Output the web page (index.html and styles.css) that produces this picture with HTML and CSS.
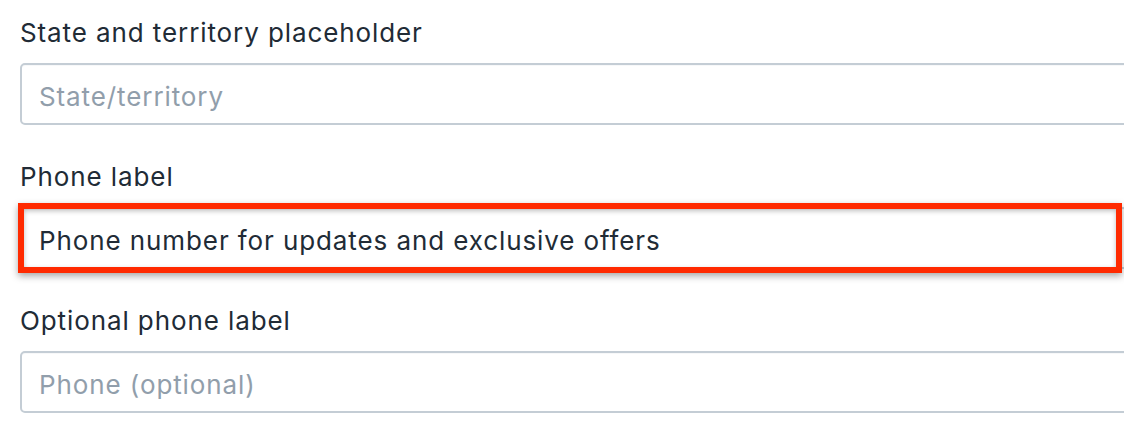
FILE: index.html
```html
<!DOCTYPE html>
<html lang="en">
<head>
<meta charset="utf-8">
<title>Form fields</title>
<link rel="stylesheet" href="styles.css">
</head>
<body>
<div class="page">
  <div class="field">
    <label class="label" for="state">State and territory placeholder</label>
    <div class="input-wrap">
      <input class="input" id="state" type="text" placeholder="State/territory">
    </div>
  </div>
  <div class="field">
    <label class="label" for="phone">Phone label</label>
    <div class="input-wrap">
      <input class="input" id="phone" type="text" value="Phone number for updates and exclusive offers">
      <div class="highlight"></div>
    </div>
  </div>
  <div class="field">
    <label class="label" for="phone2">Optional phone label</label>
    <div class="input-wrap">
      <input class="input" id="phone2" type="text" placeholder="Phone (optional)">
    </div>
  </div>
</div>
</body>
</html>
```
FILE: styles.css
```css
html, body {
  margin: 0;
  padding: 0;
  background: #ffffff;
  overflow: hidden;
}
body {
  width: 1124px;
  height: 440px;
  font-family: Inter, "Noto Sans", sans-serif;
  color: #212b36;
}
.page {
  padding: 17px 0 0 20px;
  display: flex;
  flex-direction: column;
}
.field {
  display: flex;
  flex-direction: column;
  margin-bottom: 36px;
}
.label {
  display: block;
  font-size: 26px;
  line-height: 32px;
  letter-spacing: 0.9px;
  color: #212b36;
  margin-bottom: 14px;
}
.input-wrap {
  position: relative;
}
.input {
  box-sizing: border-box;
  display: block;
  width: 1130px;
  height: 62px;
  margin: 0;
  padding: 4px 17px 0;
  border: 2px solid #c4cdd5;
  border-radius: 5px;
  background: #ffffff;
  box-shadow: inset 0 1px 0 0 rgba(99, 115, 129, 0.05);
  font-family: Inter, "Noto Sans", sans-serif;
  font-size: 26px;
  letter-spacing: 0.9px;
  color: #212b36;
  outline: none;
}
.input::placeholder {
  color: #919eab;
  opacity: 1;
}
.highlight {
  position: absolute;
  left: -2px;
  top: -4px;
  width: 1104px;
  height: 70px;
  box-sizing: border-box;
  border: 6px solid #ff2a00;
  box-shadow: 0 3px 7px rgba(0, 0, 0, 0.35), inset 0 2px 5px rgba(0, 0, 0, 0.25);
  pointer-events: none;
}
```
